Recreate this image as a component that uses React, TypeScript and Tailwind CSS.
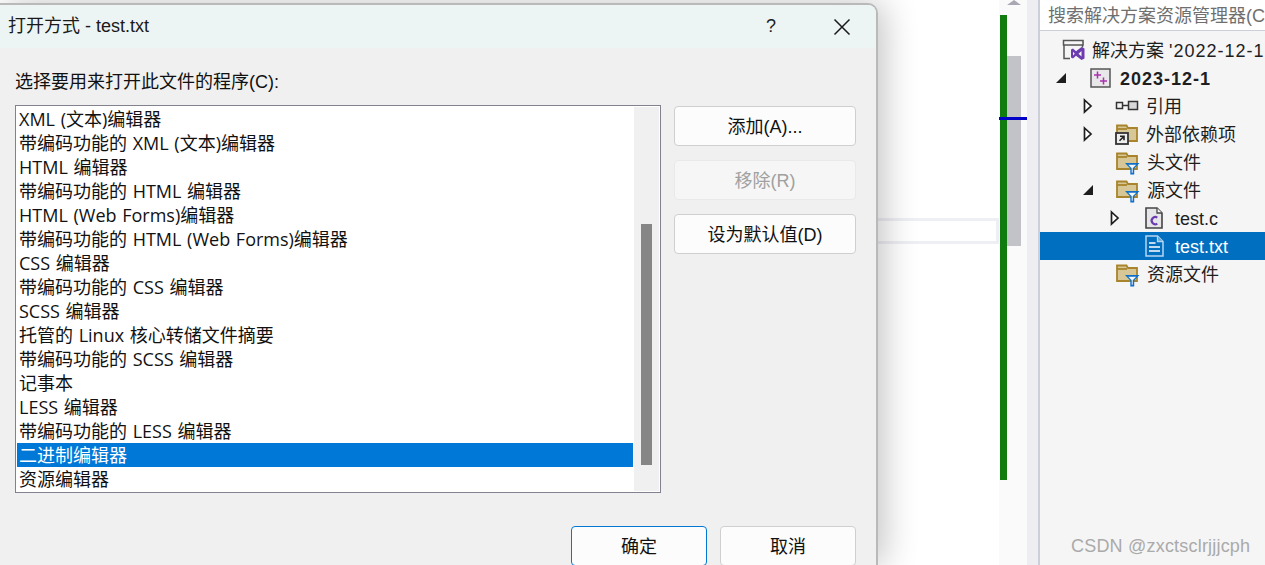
import React from 'react';

const font = { fontFamily: '"Liberation Sans", "Noto Sans CJK SC", sans-serif' };
const listFont = { fontFamily: '"Open Sans", "Noto Sans CJK SC", sans-serif' };

const programs = [
  'XML (文本)编辑器',
  '带编码功能的 XML (文本)编辑器',
  'HTML 编辑器',
  '带编码功能的 HTML 编辑器',
  'HTML (Web Forms)编辑器',
  '带编码功能的 HTML (Web Forms)编辑器',
  'CSS 编辑器',
  '带编码功能的 CSS 编辑器',
  'SCSS 编辑器',
  '托管的 Linux 核心转储文件摘要',
  '带编码功能的 SCSS 编辑器',
  '记事本',
  'LESS 编辑器',
  '带编码功能的 LESS 编辑器',
  '二进制编辑器',
  '资源编辑器',
];

const FilledArrow = () => (
  <svg width="12" height="12" viewBox="0 0 12 12"><path d="M11 1V11H1z" fill="#1e1e1e" /></svg>
);

const HollowArrow = () => (
  <svg width="12" height="16" viewBox="0 0 12 16"><path d="M1.500 2L8 8l-6.500 6z" fill="#fff" stroke="#1e1e1e" strokeWidth="1.700" /></svg>
);

const SolutionIcon = () => (
  <svg width="24" height="22" viewBox="0 0 24 22">
    <path d="M2 2h18.500v6.500" fill="none" stroke="#555" strokeWidth="1.500" />
    <path d="M1.500 1.500h19.500v4.500H1.500z" fill="#f5f5f5" stroke="#555" strokeWidth="1.500" />
    <path d="M2 6v13.500h6" fill="none" stroke="#555" strokeWidth="1.500" />
    <path d="M9 10.500l2-1 3 2.800 5.500-4.300 3 1.500v10l-3 1.500-5.500-4.300-3 2.800-2-1z" fill="#6c3bb0" />
    <path d="M11 12.800v3.700l1.800-1.800zM19.500 12l-3 2.700 3 2.700z" fill="#f5f5f5" />
  </svg>
);

const ProjectIcon = () => (
  <svg width="21" height="20" viewBox="0 0 21 20">
    <rect x="1" y="1" width="19" height="18" fill="#e8e7ea" stroke="#555" strokeWidth="1.500" />
    <path d="M4 7h7M7.500 3.500v7M10 13h7M13.500 9.500v7" stroke="#a931b0" strokeWidth="1.500" />
  </svg>
);

const RefIcon = () => (
  <svg width="25" height="14" viewBox="0 0 25 14">
    <rect x="1.500" y="3.500" width="6" height="6" fill="#f5f5f5" stroke="#333" strokeWidth="1.500" />
    <path d="M7.500 6.500h6" stroke="#333" strokeWidth="1.500" />
    <rect x="13.500" y="2.500" width="9" height="8" fill="#d8d8d8" stroke="#333" strokeWidth="1.500" />
  </svg>
);

const FolderBase = () => (
  <>
    <path d="M1 3.500h9.500l1.500 2.500h9v13H1z" fill="#d8c796" stroke="#a8842c" strokeWidth="1.800" />
    <path d="M1 7h10" fill="none" stroke="#a8842c" strokeWidth="1.800" />
  </>
);

const ExternalFolderIcon = () => (
  <svg width="24" height="24" viewBox="0 0 24 24">
    <g transform="translate(1 0)"><FolderBase /></g>
    <rect x="1" y="11" width="12" height="11" fill="#eeeeee" stroke="#333" strokeWidth="1.800" />
    <path d="M4.500 18.800l4.500-4.500M5 14.300h4v4" fill="none" stroke="#222" strokeWidth="1.600" />
  </svg>
);

const FilterFolderIcon = () => (
  <svg width="24" height="25" viewBox="0 0 24 25">
    <FolderBase />
    <path d="M9 13h14.500l-5.300 5.500v6h-3.900v-6z" fill="#0f6fc6" />
    <path d="M12.300 14.800h7.900l-3.500 3.400v4.500h-1v-4.500z" fill="#f2f7fc" />
  </svg>
);

const CFileIcon = () => (
  <svg width="18" height="22" viewBox="0 0 18 22">
    <path d="M1 1h11l5 5v15H1z" fill="#e6e5e8" stroke="#444" strokeWidth="1.600" />
    <path d="M12 1v5h5" fill="#f5f5f5" stroke="#444" strokeWidth="1.300" />
    <path d="M12.300 10.600a3.600 3.600 0 1 0 0 6" fill="none" stroke="#6c3bb0" strokeWidth="2.200" />
  </svg>
);

const TextFileIcon = () => (
  <svg width="19" height="22" viewBox="0 0 19 22">
    <path d="M1 1h11.500L18 6.500V21H1z" fill="#016fc0" stroke="#b5d6f0" strokeWidth="1.500" />
    <path d="M12.500 1v5.500H18" fill="#5ea6dc" stroke="#b5d6f0" strokeWidth="1.300" />
    <path d="M4 8h6.500M4 12h11M4 16h11" stroke="#ffffff" strokeWidth="1.500" />
  </svg>
);

const DialogButton = ({ label, disabled, primary, className }: { label: string; disabled?: boolean; primary?: boolean; className: string }) => (
  <div
    className={`${className} flex items-center justify-center rounded-[4px] border pt-px text-[18px] leading-6 ${
      disabled
        ? 'border-[#e9e9e9] bg-[#f6f6f6] text-[#a0a0a0]'
        : primary
          ? 'border-[#0078d4] bg-[#fcfcfc] text-[#111]'
          : 'border-[#cfcfcf] bg-[#fcfcfc] text-[#111]'
    }`}
  >
    {label}
  </div>
);

const OpenWithDialog = () => (
  <div className="relative z-10 mt-[3px] flex h-[562px] w-[878px] shrink-0 flex-col rounded-tr-[10px] border-t-2 border-r-2 border-[#b9b9b9] bg-[#f0f0f0] shadow-[6px_0_34px_rgba(0,0,0,0.24)]">
    <div className="flex h-[43px] shrink-0 items-center justify-between rounded-tr-[8px] bg-[#edf5f4] pr-[25px] pl-[8px]">
      <span className="text-[18px] text-[#1a1a1a]">打开方式 - test.txt</span>
      <div className="flex items-center gap-[57px]">
        <span className="text-[18px] text-[#222]">?</span>
        <svg width="18" height="18" viewBox="0 0 18 18"><path d="M1.500 1.500l15 15M16.500 1.500l-15 15" stroke="#1a1a1a" strokeWidth="1.500" /></svg>
      </div>
    </div>
    <div className="flex-1 pt-[22px] pl-[15px]">
      <div className="h-[35px] text-[18px] leading-6 text-[#111]">选择要用来打开此文件的程序(C):</div>
      <div className="flex gap-[13px]">
        <div className="flex h-[388px] w-[646px] border border-[#82828f] bg-white">
          <div className="w-[617px] pt-px pl-px" style={listFont}>
            {programs.map((p) => (
              <div
                key={p}
                className={`h-6 truncate pl-[2px] text-[18px] leading-6 [word-spacing:1px] ${p === '二进制编辑器' ? 'bg-[#0078d7] text-white' : 'text-[#111]'}`}
              >
                {p}
              </div>
            ))}
          </div>
          <div className="m-px flex flex-1 justify-center bg-[#f0f0f0] pt-[117px]">
            <div className="h-[241px] w-[11px] bg-[#868686]" />
          </div>
        </div>
        <div className="flex flex-col gap-[14px] pt-px">
          <DialogButton className="h-10 w-[182px]" label="添加(A)..." />
          <DialogButton className="h-10 w-[182px]" label="移除(R)" disabled />
          <DialogButton className="h-10 w-[182px]" label="设为默认值(D)" />
        </div>
      </div>
      <div className="mt-[33px] flex justify-end gap-[13px] pr-[20px]">
        <DialogButton className="h-10 w-[136px]" label="确定" primary />
        <DialogButton className="h-10 w-[136px]" label="取消" />
      </div>
    </div>
  </div>
);

const TreeRow = ({ pad, arrow, icon, iconWidth, label, bold, selected }: { pad: string; arrow?: React.ReactNode; icon: React.ReactNode; iconWidth: string; label: React.ReactNode; bold?: boolean; selected?: boolean }) => (
  <div className={`flex h-7 items-center whitespace-nowrap text-[18px] ${pad} ${selected ? 'bg-[#016fc0] text-white' : 'text-[#1e1e1e]'} ${bold ? 'font-bold' : ''}`}>
    <div className="flex w-[14px] shrink-0 items-center">{arrow}</div>
    <div className={`flex shrink-0 items-center ${iconWidth}`}>{icon}</div>
    <span className="pt-[2px]">{label}</span>
  </div>
);

const SolutionExplorer = () => (
  <div className="flex w-[225px] shrink-0 flex-col overflow-hidden bg-[#f5f5f5]">
    <div className="h-[31px] shrink-0 overflow-hidden border-b border-[#ccced8] bg-white pl-[8px] text-[18px] leading-[32px] whitespace-nowrap text-[#6f6f6f]">
      搜索解决方案资源管理器(C
    </div>
    <div className="pt-[5px]">
      <TreeRow pad="pl-[8px]" icon={<SolutionIcon />} iconWidth="w-[30px]" label={<>解决方案 <span className="tracking-[1px]">'2022-12-1</span></>} />
      <TreeRow pad="pl-[15px]" arrow={<FilledArrow />} icon={<ProjectIcon />} iconWidth="w-[30px] ml-[21px]" label={<span className="tracking-[1px]">2023-12-1</span>} bold />
      <TreeRow pad="pl-[43px]" arrow={<HollowArrow />} icon={<RefIcon />} iconWidth="w-[31px] ml-[18px]" label="引用" />
      <TreeRow pad="pl-[43px]" arrow={<HollowArrow />} icon={<ExternalFolderIcon />} iconWidth="w-[31px] ml-[18px]" label="外部依赖项" />
      <TreeRow pad="pl-[43px]" icon={<FilterFolderIcon />} iconWidth="w-[31px] ml-[19px]" label="头文件" />
      <TreeRow pad="pl-[42px]" arrow={<FilledArrow />} icon={<FilterFolderIcon />} iconWidth="w-[31px] ml-[20px]" label="源文件" />
      <TreeRow pad="pl-[70px]" arrow={<HollowArrow />} icon={<CFileIcon />} iconWidth="w-[30px] ml-[21px]" label="test.c" />
      <TreeRow pad="pl-[70px]" icon={<TextFileIcon />} iconWidth="w-[30px] ml-[21px]" label="test.txt" selected />
      <TreeRow pad="pl-[43px]" icon={<FilterFolderIcon />} iconWidth="w-[31px] ml-[19px]" label="资源文件" />
    </div>
  </div>
);

export default function App() {
  return (
    <div className="relative flex h-[565px] w-[1265px] overflow-hidden bg-white" style={font}>
      <OpenWithDialog />

      {/* editor fragment behind the dialog */}
      <div className="w-[121px] shrink-0 pt-[218px]">
        <div className="h-[26px] border-[3px] border-l-0 border-[#eeeef5] bg-white" />
      </div>

      {/* green change bar + scrollbar */}
      <div className="relative flex w-[28px] shrink-0 bg-[#fafafa] pl-px">
        <div className="mt-[15px] h-[465px] w-[7px] bg-[#107c10]" />
        <div className="mt-[56px] h-[190px] w-[14px] bg-[#c2c3c9]" />
        <div className="absolute top-0 left-[8px] h-0 w-0 border-x-[7px] border-t-0 border-b-[5px] border-x-transparent border-b-[#a8a9b4]" />
        <div className="absolute top-[117px] left-0 h-[3px] w-[28px] bg-[#0000c8]" />
      </div>

      <div className="w-[13px] shrink-0 border-r-2 border-l-0 border-[#ccced8] bg-[#eeeef2]" />
      <SolutionExplorer />

      <div className="absolute top-[536px] left-[1071px] text-[18px] leading-5 tracking-[0.2px] whitespace-nowrap text-[#aaaaaa]">
        CSDN @zxctsclrjjjcph
      </div>
    </div>
  );
}
